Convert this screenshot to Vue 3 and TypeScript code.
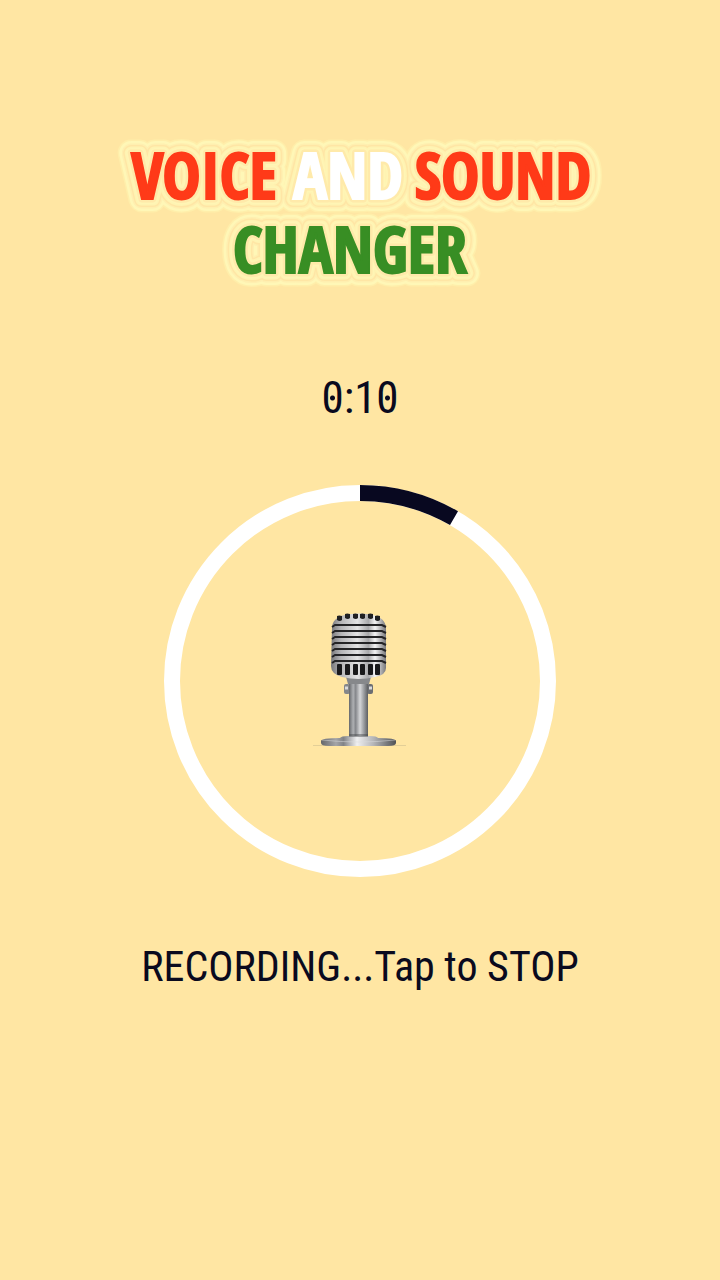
<script setup lang="ts">
import { computed, ref } from 'vue'

const elapsed = ref(10)
const limit = 120
const recording = ref(true)

const radius = 188
const circumference = 2 * Math.PI * radius
const arc = computed(() => `${(circumference * elapsed.value) / limit} ${circumference}`)
const clock = computed(() => {
  const seconds = String(elapsed.value % 60).padStart(2, '0')
  return `${Math.floor(elapsed.value / 60)}:${seconds}`
})

const slots = [337, 345, 353, 360, 368, 375]
const ribs = [624, 630, 636, 642, 648, 654, 660]
const halo = [
  { width: 27, color: '#ffeeaa' },
  { width: 24, color: '#fff7b7' },
  { width: 19, color: '#ffefb0' },
  { width: 16, color: '#ffe6a5' },
  { width: 13, color: '#fff3b2' },
  { width: 10, color: '#fff5b5' },
  { width: 7, color: '#ffeaaa' },
]
</script>

<template>
  <main class="screen">
    <h1 class="title">
      <svg viewBox="110 130 500 170" role="img" aria-label="Voice and Sound Changer">
        <defs>
          <g id="title-words" class="words">
            <text x="204" y="199">VOICE</text>
            <text x="348" y="199">AND</text>
            <text x="503" y="199">SOUND</text>
            <text x="350" y="273">CHANGER</text>
          </g>
        </defs>
        <use
          v-for="ring in halo"
          :key="ring.width"
          href="#title-words"
          :fill="ring.color"
          :stroke="ring.color"
          :stroke-width="ring.width"
          stroke-linejoin="round"
        />
        <g class="words letters">
          <text class="red" x="204" y="199">VOICE</text>
          <text class="white" x="348" y="199">AND</text>
          <text class="red" x="503" y="199">SOUND</text>
          <text class="green" x="350" y="273">CHANGER</text>
        </g>
      </svg>
    </h1>

    <p class="clock" role="timer">
      <span v-for="(char, i) in clock" :key="i" :class="{ zero: char === '0' }">{{ char }}</span>
    </p>

    <button class="dial" type="button" aria-labelledby="status" @click="recording = !recording">
      <svg viewBox="164 485 392 392" aria-hidden="true">
        <defs>
          <linearGradient id="head">
            <stop offset="0" stop-color="#77777a" />
            <stop offset=".18" stop-color="#b5b5b7" />
            <stop offset=".48" stop-color="#e4e4e5" />
            <stop offset=".68" stop-color="#a9a9ab" />
            <stop offset=".8" stop-color="#f4f4f5" />
            <stop offset="1" stop-color="#77777a" />
          </linearGradient>
          <linearGradient id="stem">
            <stop offset="0" stop-color="#66686b" />
            <stop offset=".22" stop-color="#aeb0b3" />
            <stop offset=".35" stop-color="#85878b" />
            <stop offset=".58" stop-color="#d5d6d8" />
            <stop offset=".8" stop-color="#96989b" />
            <stop offset="1" stop-color="#5d5f62" />
          </linearGradient>
          <linearGradient id="base">
            <stop offset="0" stop-color="#65676b" />
            <stop offset=".2" stop-color="#a4a5a8" />
            <stop offset=".3" stop-color="#818387" />
            <stop offset=".48" stop-color="#f0f0f1" />
            <stop offset=".7" stop-color="#b4b5b8" />
            <stop offset=".88" stop-color="#77797c" />
            <stop offset="1" stop-color="#505256" />
          </linearGradient>
        </defs>
        <circle cx="360" cy="681" :r="radius" fill="none" stroke="#fff" stroke-width="16" />
        <circle
          cx="360"
          cy="681"
          :r="radius"
          fill="none"
          stroke="#080820"
          stroke-width="16"
          :stroke-dasharray="arc"
          transform="rotate(-90 360 681)"
        />

        <path d="M313 745.500H406" stroke="#e3cf97" stroke-width="1" />
        <rect x="344" y="684" width="6" height="10" rx="2" fill="#85878a" />
        <rect x="367" y="684" width="6" height="10" rx="2" fill="#6c6e72" />
        <path d="M345 688h3M369 688h3" stroke="#d9dadc" stroke-width="3" />
        <path d="M321 741Q321 738 340 738Q341 736 348 736H370Q377 736 378 738Q396 738 396 741V743Q396 746 388 746H329Q321 746 321 743Z" fill="url(#base)" />
        <path d="M322 740Q359 744 395 740" fill="none" stroke="#dadbdd" stroke-width="1" opacity=".5" />
        <path d="M349 677H368V736H349Z" fill="url(#stem)" />
        <path d="M349 734H368V737H349Z" fill="#45474a" opacity=".45" />
        <path d="M346 677H371L369 684H348Z" fill="#86888b" />
        <path d="M332 628Q332 618 345 615Q359 612 373 615Q386 618 386 629V668Q386 675 375 677Q359 681 342 677Q331 674 331 666Z" fill="url(#head)" />
        <path
          v-for="y in ribs"
          :key="y"
          :d="`M332 ${y + 3}l3 -2H382l4 2`"
          fill="none"
          stroke="#242426"
          stroke-width="2"
        />
        <path
          v-for="(x, i) in slots"
          :key="`top-${x}`"
          :d="`M${x} ${i === 0 || i === 5 ? 616 : 614}q2 -1 5 0v4q-2 2 -5 0z`"
          fill="#202022"
        />
        <rect
          v-for="x in slots"
          :key="`bottom-${x}`"
          :x="x"
          y="664"
          width="5"
          height="11"
          rx="1"
          fill="#19191b"
        />
      </svg>
    </button>

    <p id="status" class="status">{{ recording ? 'RECORDING...Tap to STOP' : 'Tap to RECORD' }}</p>
  </main>
</template>

<style>
body {
  margin: 0;
  background: #ffe6a3;
}
</style>

<style scoped>
.screen {
  box-sizing: border-box;
  min-height: 100vh;
  padding: 130px 16px 32px;
  display: flex;
  flex-direction: column;
  align-items: center;
  background: #ffe6a3;
  color: #0a0a1e;
  font-family: "Roboto Condensed", "Open Sans Condensed Light", Lato, sans-serif;
}

.title {
  width: 100%;
  max-width: 500px;
  margin: 0;
}

.title svg,
.dial svg {
  display: block;
  width: 100%;
  height: auto;
}

.words {
  font-family: "Open Sans Condensed", "Roboto Condensed", sans-serif;
  font-size: 64px;
  font-weight: 700;
  text-anchor: middle;
}

.letters text {
  stroke-width: 2px;
}

.red {
  fill: #ff3a18;
  stroke: #ff3a18;
}

.white {
  fill: #fff;
  stroke: #fff;
}

.green {
  fill: #388e24;
  stroke: #388e24;
}

.clock {
  margin: 68px 0 0;
  font-size: 45px;
  line-height: 60px;
}

.clock span {
  display: inline-block;
}

.zero {
  background: radial-gradient(circle at 50% 50%, #0a0a1e 2px, transparent 3px);
}

.dial {
  width: 100%;
  max-width: 392px;
  margin: 57px 0 0;
  padding: 0;
  border: 0;
  border-radius: 50%;
  background: none;
  cursor: pointer;
}

.status {
  margin: 60px 0 0;
  font-size: 42px;
  line-height: 60px;
  text-align: center;
}
</style>
